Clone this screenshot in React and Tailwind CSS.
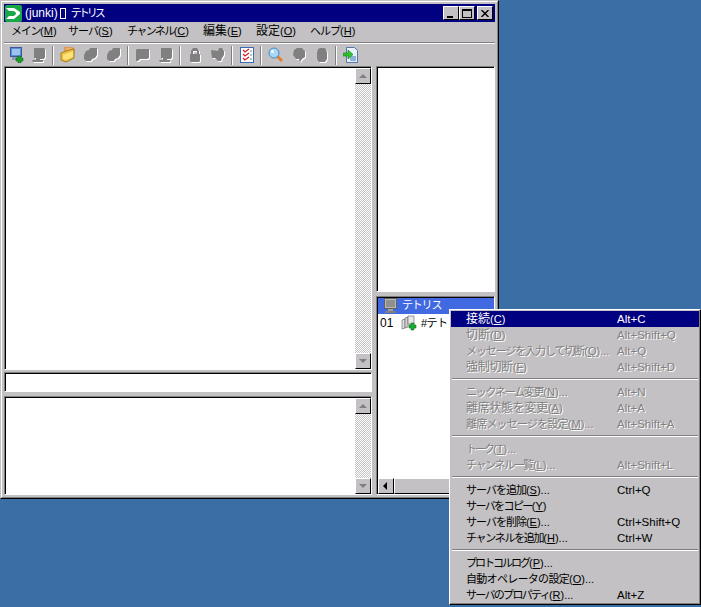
import React from 'react';

const FONT = { fontFamily: '"Liberation Sans", "Noto Sans CJK JP", sans-serif' };

const MENUS = [
  { label: 'メイン', key: 'M', w: 'w-[57px]', cls: 'text-[11px] tracking-[-1.3px]' },
  { label: 'サーバ', key: 'S', w: 'w-[59px]', cls: 'text-[11px] tracking-[-1px]' },
  { label: 'チャンネル', key: 'C', w: 'w-[76px]', cls: 'text-[11px] tracking-[-1.6px]' },
  { label: '編集', key: 'E', w: 'w-[53px]', cls: 'text-[12px]' },
  { label: '設定', key: 'O', w: 'w-[54px]', cls: 'text-[12px]' },
  { label: 'ヘルプ', key: 'H', w: 'w-[50px]', cls: 'text-[11px] tracking-[-1px]' },
];

const MENU_GROUPS = [
  [
    { label: '接続', key: 'C', accel: 'Alt+C', active: true, cls: 'text-[12px]' },
    { label: '切断', key: 'D', accel: 'Alt+Shift+Q', off: true, cls: 'text-[12px]' },
    { label: 'メッセージを入力して切断', key: 'Q', dots: true, accel: 'Alt+Q', off: true, cls: 'text-[11px] tracking-[-1.1px]' },
    { label: '強制切断', key: 'F', accel: 'Alt+Shift+D', off: true, cls: 'text-[12px] tracking-[-0.3px]' },
  ],
  [
    { label: 'ニックネーム変更', key: 'N', dots: true, accel: 'Alt+N', off: true, cls: 'text-[11px] tracking-[-1.3px]' },
    { label: '離席状態を変更', key: 'A', accel: 'Alt+A', off: true, cls: 'text-[12px] tracking-[-0.3px]' },
    { label: '離席メッセージを設定', key: 'M', dots: true, accel: 'Alt+Shift+A', off: true, cls: 'text-[11px] tracking-[-0.8px]' },
  ],
  [
    { label: 'トーク', key: 'T', dots: true, off: true, cls: 'text-[11px] tracking-[-2px]' },
    { label: 'チャンネル一覧', key: 'L', dots: true, accel: 'Alt+Shift+L', off: true, cls: 'text-[11px] tracking-[-1.4px]' },
  ],
  [
    { label: 'サーバを追加', key: 'S', dots: true, accel: 'Ctrl+Q', cls: 'text-[11px] tracking-[-1px]' },
    { label: 'サーバをコピー', key: 'Y', cls: 'text-[11px] tracking-[-1.6px]' },
    { label: 'サーバを削除', key: 'E', dots: true, accel: 'Ctrl+Shift+Q', cls: 'text-[11px] tracking-[-1px]' },
    { label: 'チャンネルを追加', key: 'H', dots: true, accel: 'Ctrl+W', cls: 'text-[11px] tracking-[-1.3px]' },
  ],
  [
    { label: 'プロトコルログ', key: 'P', dots: true, cls: 'text-[11px] tracking-[-2px]' },
    { label: '自動オペレータの設定', key: 'O', dots: true, cls: 'text-[11px] tracking-[-0.7px]' },
    { label: 'サーバのプロパティ', key: 'R', dots: true, accel: 'Alt+Z', cls: 'text-[11px] tracking-[-1.7px]' },
  ],
];

// gray toolbar glyph with the white disabled edge
function Ghost({ d }) {
  return (
    <svg width="16" height="16" viewBox="0 0 16 16">
      <path d={d} fill="#fff" transform="translate(1 1)" />
      <path d={d} fill="#808080" />
    </svg>
  );
}

function ServerAdd() {
  return (
    <svg width="16" height="16" viewBox="0 0 16 16">
      <rect x="2.5" y="0.5" width="11" height="9" fill="#5b8fd8" stroke="#3a5a98" />
      <rect x="4" y="2" width="8" height="6" fill="#9cc4f0" />
      <rect x="4" y="10" width="6" height="3" fill="#8a9ab8" />
      <path d="M10 9h3v2h2v3h-2v2h-3v-2H8v-3h2z" fill="#18a028" stroke="#0a5a14" strokeWidth="0.5" />
    </svg>
  );
}

function Folder() {
  return (
    <svg width="16" height="16" viewBox="0 0 16 16">
      <path d="M5 0h6l3 2v4H5z" fill="#f4b060" stroke="#d06a20" strokeWidth="0.7" />
      <path d="M1 6l5-2 8-2v9l-8 4-5-2z" fill="#f0c040" stroke="#a08020" />
      <path d="M3 8l10-4v6l-7 3-3-1z" fill="#fce078" />
    </svg>
  );
}

function Checklist() {
  return (
    <svg width="16" height="16" viewBox="0 0 16 16">
      <rect x="1.5" y="0.5" width="13" height="15" fill="#fff" stroke="#3a6ab0" />
      <path d="M4 3l2 2 4-3M4 7l2 2 4-3M4 11l2 2 4-3" fill="none" stroke="#d02020" strokeWidth="1.3" />
      <path d="M11 4h2M11 8h2M11 12h2" stroke="#808080" />
    </svg>
  );
}

function Magnifier() {
  return (
    <svg width="16" height="16" viewBox="0 0 16 16">
      <path d="M9 9l5 5" stroke="#e08030" strokeWidth="3" />
      <circle cx="6" cy="6" r="5" fill="#a8d8f8" stroke="#4a88c0" />
      <circle cx="4.5" cy="4.5" r="1.5" fill="#fff" />
    </svg>
  );
}

function DocArrow() {
  return (
    <svg width="16" height="16" viewBox="0 0 16 16">
      <path d="M3.5 0.5h8l3 3v12h-11z" fill="#e8f0fa" stroke="#5078a8" />
      <rect x="7" y="9" width="6" height="5" fill="#90b0d8" />
      <path d="M0 6h5V3l5 4.5L5 12V9H0z" fill="#30c030" stroke="#108010" strokeWidth="0.6" />
    </svg>
  );
}

function Monitor() {
  return (
    <svg width="16" height="16" viewBox="0 0 16 16">
      <rect x="1.5" y="0.5" width="12" height="10" fill="#b8b8b8" stroke="#606060" />
      <rect x="3" y="2" width="9" height="7" fill="#909090" />
      <rect x="5" y="11" width="5" height="2" fill="#a0a0a0" />
      <rect x="2" y="13" width="11" height="2" fill="#808080" />
    </svg>
  );
}

function ChannelAdd() {
  return (
    <svg width="16" height="16" viewBox="0 0 16 16">
      <path d="M1 5l3-1v9l-3 1z" fill="#e0e0e0" stroke="#707070" strokeWidth="0.7" />
      <path d="M4 3l3-1v10l-3 1z" fill="#d0d0d0" stroke="#707070" strokeWidth="0.7" />
      <path d="M7 1h6v8H7z" fill="#e8e8e8" stroke="#707070" strokeWidth="0.7" />
      <path d="M10 8h3v2h2v3h-2v2h-3v-2H8v-3h2z" fill="#18b030" stroke="#0a5a14" strokeWidth="0.5" />
    </svg>
  );
}

const SCREEN = 'M3 1h10l1 1v8l-1 2H9v1h3v2H2l-1-2h4v-2H3z';
const BUBBLE = 'M2 2h12v9l-2 1H5l-2 2H1V3z';
const CHANNEL = 'M1 8l2-4 3-1 1-2h7v7l-2 3-3 1-1 2H3l-2-2z';
const LOCK = 'M4 7V4l2-3h4l2 3v3h1v7l-1 1H4l-1-1V7zM6 7h4V4H6z';
const USERS = 'M1 3l7 1 1-3h3l2 3v4l-2 3-1 3H8L5 11H2z';
const HEAD = 'M3 3l3-2h5l3 3v6l-3 2-2 3-1-3H5L2 8z';
const BLOB = 'M4 2l2-1h4l2 1 1 4v6l-2 3H5l-2-3V6z';

function Sep() {
  return <div className="mx-[2px] h-[19px] w-[2px] border-l border-l-[#808080] border-r border-r-white" />;
}

function Tool({ children }) {
  return <div className="flex h-[22px] w-[23px] items-center justify-center">{children}</div>;
}

function Sunken({ className = '', children }) {
  return (
    <div className={`border border-t-[#808080] border-l-[#808080] border-r-white border-b-white ${className}`}>
      <div className="flex h-full w-full border-t border-l border-t-black border-l-black bg-white">
        {children}
      </div>
    </div>
  );
}

function ArrowButton({ dir, dark }) {
  const points = {
    up: '1,6 5,2 9,6',
    down: '1,2 5,6 9,2',
    left: '6,0 2,4 6,8',
  };
  return (
    <div className="flex h-[16px] w-[16px] shrink-0 items-center justify-center border border-t-white border-l-white border-r-black border-b-black bg-[#c3c1c3]">
      <svg width="10" height="8" viewBox="0 0 10 8">
        <polygon points={points[dir]} fill={dark ? '#000' : '#808080'} />
      </svg>
    </div>
  );
}

function VScroll() {
  return (
    <div className="ml-auto flex h-full w-[16px] flex-col bg-[repeating-conic-gradient(#fff_0_25%,#c3c1c3_0_50%)] bg-[length:2px_2px]">
      <ArrowButton dir="up" />
      <div className="flex-1" />
      <ArrowButton dir="down" />
    </div>
  );
}

// kana gets squeezed, the (X)... part keeps normal spacing
function Mnemonic({ label, k, dots, cls }) {
  return (
    <>
      <span className={cls}>{label}</span>(<span className="underline underline-offset-1">{k}</span>){dots ? '...' : ''}
    </>
  );
}

function MenuItem({ item }) {
  const color = item.active
    ? 'bg-[#000080] text-white'
    : item.off
      ? 'text-[#808080] [text-shadow:1px_1px_0_#fff]'
      : 'text-black';
  return (
    <div className={`flex h-[16px] items-center whitespace-nowrap pl-[15px] leading-[16px] ${color}`}>
      <span className="w-[151px]">
        <Mnemonic label={item.label} k={item.key} dots={item.dots} cls={item.cls} />
      </span>
      <span className="text-[11.5px]">{item.accel}</span>
    </div>
  );
}

export default function App() {
  return (
    <div className="relative h-[607px] w-[701px] overflow-hidden bg-[#3a6ea5] text-[11px]" style={FONT}>
      {/* Main window */}
      <div className="h-[499px] w-[499px] border border-t-[#c3c1c3] border-l-[#c3c1c3] border-r-black border-b-black">
        <div className="flex h-full w-full flex-col border border-t-white border-l-white border-r-[#808080] border-b-[#808080] bg-[#c3c1c3] p-[2px]">
          {/* Title bar */}
          <div className="flex h-[18px] shrink-0 items-center bg-[#000080] text-[12px] text-white">
            <svg width="17" height="17" viewBox="0 0 17 17" className="ml-[1px] mr-[3px] shrink-0">
              <rect width="17" height="17" rx="2" fill="#18a848" />
              <path d="M1 3h8l6 4v2l-6 5H1l3-3h5l2-2V8L9 6H4z" fill="#fff" />
            </svg>
            <span>(junki)</span>
            <span className="ml-[2px] inline-block h-[11px] w-[6px] border border-white" />
            <span className="ml-[5px] text-[11px] tracking-[-3px]">テトリス</span>
            <div className="ml-auto mr-[2px] flex">
              <div className="flex h-[14px] w-[16px] items-end border border-t-white border-l-white border-r-black border-b-black bg-[#c3c1c3] pb-[1px] pl-[3px]">
                <div className="h-[2px] w-[6px] bg-black" />
              </div>
              <div className="flex h-[14px] w-[16px] items-center justify-center border border-t-white border-l-white border-r-black border-b-black bg-[#c3c1c3]">
                <div className="h-[9px] w-[10px] border border-t-2 border-black" />
              </div>
              <div className="ml-[2px] flex h-[14px] w-[16px] items-center justify-center border border-t-white border-l-white border-r-black border-b-black bg-[#c3c1c3]">
                <svg width="8" height="7" viewBox="0 0 8 7">
                  <path d="M0.5 0l7 7M7.5 0l-7 7" stroke="#000" strokeWidth="1.4" />
                </svg>
              </div>
            </div>
          </div>

          {/* Menu bar */}
          <div className="flex h-[20px] shrink-0 items-center whitespace-nowrap pb-[2px] pl-[7px] text-black">
            {MENUS.map((m) => (
              <span key={m.key} className={m.w}>
                <Mnemonic label={m.label} k={m.key} cls={m.cls} />
              </span>
            ))}
          </div>
          <div className="h-[2px] shrink-0 border-t border-t-[#808080] border-b border-b-white" />

          {/* Toolbar */}
          <div className="flex h-[22px] shrink-0 items-center">
            <Tool><ServerAdd /></Tool>
            <Tool><Ghost d={SCREEN} /></Tool>
            <Sep />
            <Tool><Folder /></Tool>
            <Tool><Ghost d={CHANNEL} /></Tool>
            <Tool><Ghost d={CHANNEL} /></Tool>
            <Sep />
            <Tool><Ghost d={BUBBLE} /></Tool>
            <Tool><Ghost d={SCREEN} /></Tool>
            <Sep />
            <Tool><Ghost d={LOCK} /></Tool>
            <Tool><Ghost d={USERS} /></Tool>
            <Sep />
            <Tool><Checklist /></Tool>
            <Sep />
            <Tool><Magnifier /></Tool>
            <Tool><Ghost d={HEAD} /></Tool>
            <Tool><Ghost d={BLOB} /></Tool>
            <Sep />
            <Tool><DocArrow /></Tool>
          </div>

          {/* Panes */}
          <div className="flex min-h-0 flex-1 gap-[4px]">
            <div className="flex w-[368px] flex-col">
              <Sunken className="h-[304px]"><VScroll /></Sunken>
              <Sunken className="mt-[2px] h-[20px]" />
              <Sunken className="mt-[4px] flex-1"><VScroll /></Sunken>
            </div>
            <div className="flex w-[119px] flex-col gap-[4px]">
              <Sunken className="h-[226px]" />
              <Sunken className="flex-1">
                <div className="flex h-full w-full flex-col">
                  <div className="flex h-[16px] items-center bg-[#4169e1] pb-[1px] pl-[5px] text-white">
                    <Monitor />
                    <span className="ml-[3px] tracking-[-1.2px]">テトリス</span>
                  </div>
                  <div className="flex h-[18px] items-center whitespace-nowrap pl-[2px] text-[12px] text-black">
                    <span className="w-[21px]">01</span>
                    <ChannelAdd />
                    <span className="ml-[4px] text-[11px] tracking-[-0.5px]">#テトリス</span>
                  </div>
                  <div className="mt-auto flex h-[16px] bg-[#c3c1c3]">
                    <ArrowButton dir="left" dark />
                    <div className="flex-1 border border-t-white border-l-white border-r-black border-b-black" />
                  </div>
                </div>
              </Sunken>
            </div>
          </div>
        </div>
      </div>

      {/* Context menu */}
      <div className="absolute left-[449px] top-[309px] w-[252px] border border-t-white border-l-white border-r-black border-b-black bg-[#c3c1c3] p-[1px] shadow-[inset_-1px_-1px_0_#808080]">
        {MENU_GROUPS.map((group, i) => (
          <div key={i}>
            {i > 0 && (
              <div className="mx-[1px] mb-[4px] mt-[3px] h-[2px] border-t border-t-[#808080] border-b border-b-white" />
            )}
            {group.map((item) => (
              <MenuItem key={item.label} item={item} />
            ))}
          </div>
        ))}
      </div>
    </div>
  );
}
